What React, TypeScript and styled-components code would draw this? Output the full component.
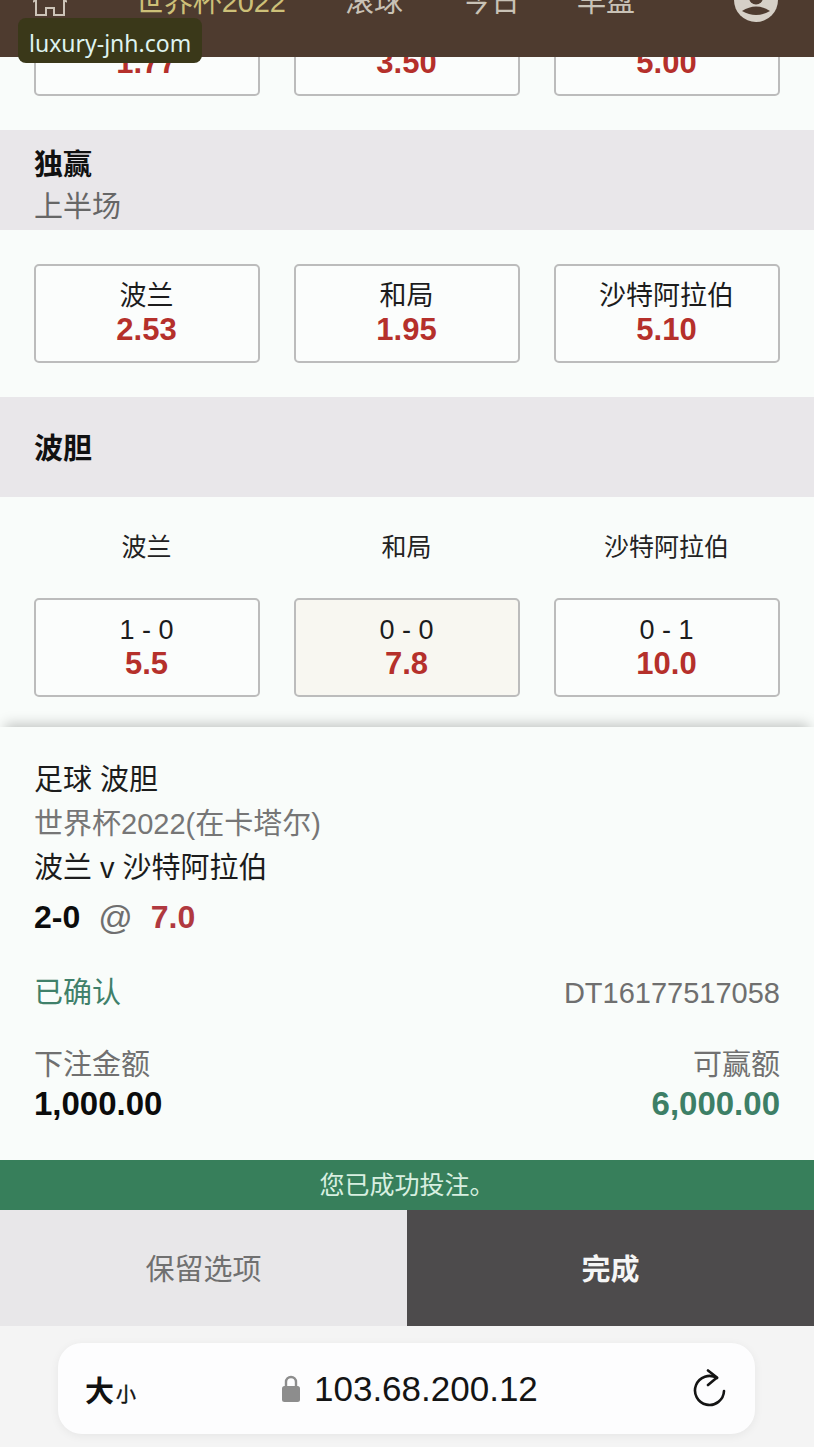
import React from "react";
import styled, { createGlobalStyle } from "styled-components";

const GlobalStyle = createGlobalStyle`
  html, body {
    margin: 0;
    padding: 0;
    background: #f9fcfa;
    font-family: "Liberation Sans", "Noto Sans CJK SC", sans-serif;
  }
  * { box-sizing: border-box; }
`;

const Page = styled.div`
  position: relative;
  width: 814px;
  height: 1447px;
  overflow: hidden;
  background: #f9fcfa;
`;

const Header = styled.header`
  position: relative;
  z-index: 2;
  height: 57px;
  overflow: hidden;
  background: #4e3b2f;
`;

const Nav = styled.nav`
  display: grid;
  grid-template-columns: 103px 210px 117px 115px 157px 42px;
  align-items: center;
  height: 42px;
  margin-top: -18px;
  padding-left: 33px;
`;

const NavItem = styled.div<{ $active?: boolean }>`
  margin: -3px 0 0 -1px;
  font-size: 29px;
  line-height: 42px;
  white-space: nowrap;
  letter-spacing: ${(p) => (p.$active ? "-0.1px" : "0")};
  color: ${(p) => (p.$active ? "#cdc078" : "#c9c2b6")};
`;

const Watermark = styled.div`
  position: absolute;
  z-index: 3;
  top: 18px;
  left: 18px;
  width: 184px;
  height: 45px;
  border-radius: 8px;
  background: #3a3819;
  color: #def3f0;
  font-family: "Noto Sans", sans-serif;
  font-size: 23px;
  line-height: 50px;
  padding-left: 11px;
  white-space: nowrap;
`;

const Market = styled.section<{ $pull?: boolean }>`
  padding: 34px 34px;
  margin-top: ${(p) => (p.$pull ? "-94px" : "0")};
`;

const LastMarket = styled(Market)`
  padding-bottom: 30px;
`;

const MarketHeader = styled.div`
  height: 100px;
  padding: 14px 34px 0;
  background: #e9e7ea;
`;

const CentredHeader = styled(MarketHeader)`
  display: flex;
  align-items: center;
  padding-top: 3px;
`;

const MarketTitle = styled.div`
  font-size: 29px;
  line-height: 42px;
  font-weight: 700;
  color: #111;
`;

const MarketSub = styled.div`
  font-size: 29px;
  line-height: 42px;
  color: #666;
`;

const Grid = styled.div`
  display: grid;
  grid-template-columns: repeat(3, 226px);
  gap: 34px;
`;

const ColumnLabel = styled.div`
  font-size: 25px;
  line-height: 30px;
  text-align: center;
  padding: 1px 1px 0 0;
  color: #222;
  margin-bottom: 36px;
`;

const OddsButton = styled.div<{ $selected?: boolean }>`
  height: 99px;
  padding: 13px 1px 0 0;
  border: 2px solid #bcbcbc;
  border-radius: 5px;
  text-align: center;
  background: ${(p) => (p.$selected ? "#f8f7f1" : "#fbfdfc")};
`;

const OddsLabel = styled.div`
  font-size: 27px;
  line-height: 34px;
  color: #1c1c1c;
`;

const OddsValue = styled.div`
  font-size: 31px;
  line-height: 34px;
  font-weight: 700;
  color: #b5302b;
`;

const Slip = styled.section`
  position: relative;
  z-index: 1;
  padding: 31px 34px 36px;
  background: #f9fcfa;
  box-shadow: 0 -8px 12px -5px rgba(0, 0, 0, 0.22);
`;

const SlipLine = styled.div<{ $muted?: boolean }>`
  font-size: 29px;
  line-height: 44px;
  white-space: nowrap;
  color: ${(p) => (p.$muted ? "#767676" : "#1c1c1c")};
`;

const BetLine = styled.div`
  display: flex;
  align-items: center;
  gap: 18px;
  height: 44px;
  margin-top: 5px;
  font-size: 32px;
`;

const BetScore = styled.span`
  font-weight: 700;
  color: #0c0c0c;
`;

const BetAt = styled.span`
  font-size: 34px;
  color: #6f6f6f;
`;

const BetOdds = styled.span`
  font-weight: 700;
  color: #b0393f;
`;

const SplitRow = styled.div`
  display: flex;
  justify-content: space-between;
  margin-top: 32px;
  font-size: 29px;
  line-height: 44px;
`;

const Confirmed = styled.span`
  color: #40806a;
`;

const Reference = styled.span`
  color: #6f6f6f;
`;

const StakeRow = styled.div`
  display: flex;
  justify-content: space-between;
  margin-top: 30px;
`;

const StakeColumn = styled.div<{ $right?: boolean }>`
  text-align: ${(p) => (p.$right ? "right" : "left")};
`;

const StakeLabel = styled.div`
  font-size: 29px;
  line-height: 40px;
  color: #707070;
`;

const StakeValue = styled.div<{ $green?: boolean }>`
  margin-top: -1px;
  font-size: 33px;
  line-height: 40px;
  font-weight: 700;
  color: ${(p) => (p.$green ? "#3d7f66" : "#0c0c0c")};
`;

const SuccessBar = styled.div`
  height: 50px;
  background: #377f5b;
  color: #d8efe0;
  font-size: 25px;
  line-height: 50px;
  text-align: center;
`;

const Actions = styled.div`
  display: grid;
  grid-template-columns: 407px 407px;
  height: 116px;
`;

const ActionButton = styled.div<{ $primary?: boolean }>`
  display: flex;
  align-items: center;
  justify-content: center;
  padding-bottom: 3px;
  font-size: 29px;
  font-weight: ${(p) => (p.$primary ? 700 : 400)};
  background: ${(p) => (p.$primary ? "#4d4b4c" : "#e8e7e9")};
  color: ${(p) => (p.$primary ? "#f5f5f5" : "#707070")};
`;

const BrowserBar = styled.div`
  height: 121px;
  padding: 17px 59px 0 58px;
  background: #f4f4f4;
`;

const UrlPill = styled.div`
  display: flex;
  align-items: center;
  height: 91px;
  padding: 0 28px 0 27px;
  border-radius: 24px;
  background: #fdfdfe;
  box-shadow: 0 2px 10px rgba(0, 0, 0, 0.06);
`;

const TextSize = styled.div`
  display: flex;
  align-items: baseline;
  width: 197px;
  font-weight: 700;
  color: #111;
  font-size: 29px;
`;

const TextSizeSmall = styled.span`
  margin-left: 2px;
  font-size: 20px;
  font-weight: 400;
  -webkit-text-stroke: 0.4px #111;
`;

const UrlText = styled.div`
  flex: 1;
  margin-left: 14px;
  font-size: 35px;
  color: #141414;
`;

const AvatarSvg = styled.svg`
  margin: -7px 0 0 -1px;
`;

const HomeIcon = () => (
  <svg width="34" height="40" viewBox="0 0 34 40" fill="none" stroke="#cdc4b8" strokeWidth="2">
    <path d="M0 19 L17 3 L34 19 M3 16 V32 H13 V25 H21 V32 H31 V16" />
  </svg>
);

const AvatarIcon = () => (
  <AvatarSvg width="44" height="44" viewBox="0 0 44 44">
    <circle cx="22" cy="22" r="22" fill="#d6d0c7" />
    <circle cx="22" cy="19.5" r="7" fill="#4e3b2f" />
    <path d="M8 33 Q22 24 36 33 Q22 41 8 33 Z" fill="#4e3b2f" />
  </AvatarSvg>
);

const LockIcon = () => (
  <svg width="18" height="28" viewBox="0 0 18 28" fill="none">
    <path d="M4 12 V7 a5 5 0 0 1 10 0 V12" stroke="#8d8d8d" strokeWidth="2.4" />
    <rect x="0" y="11" width="18" height="16" rx="2.5" fill="#8d8d8d" />
  </svg>
);

const ReloadIcon = () => (
  <svg width="34" height="40" viewBox="0 0 34 40" fill="none" stroke="#141414" strokeWidth="2.6" strokeLinecap="round" strokeLinejoin="round">
    <path d="M31 22 A14.5 14.5 0 1 1 24 9" />
    <path d="M15 1.5 L24 8.5 L15 16" />
  </svg>
);

type Odds = { label: string; value: string; selected?: boolean };

const fullTime: Odds[] = [
  { label: "波兰", value: "1.77" },
  { label: "和局", value: "3.50" },
  { label: "沙特阿拉伯", value: "5.00" },
];

const halfTime: Odds[] = [
  { label: "波兰", value: "2.53" },
  { label: "和局", value: "1.95" },
  { label: "沙特阿拉伯", value: "5.10" },
];

const scores: Odds[] = [
  { label: "1 - 0", value: "5.5" },
  { label: "0 - 0", value: "7.8", selected: true },
  { label: "0 - 1", value: "10.0" },
];

const OddsGrid = ({ items }: { items: Odds[] }) => (
  <Grid>
    {items.map((o) => (
      <OddsButton key={o.label} $selected={o.selected}>
        <OddsLabel>{o.label}</OddsLabel>
        <OddsValue>{o.value}</OddsValue>
      </OddsButton>
    ))}
  </Grid>
);

const App = () => {
  return (
    <Page>
      <GlobalStyle />
      <Header>
        <Nav>
          <HomeIcon />
          <NavItem $active>世界杯2022</NavItem>
          <NavItem>滚球</NavItem>
          <NavItem>今日</NavItem>
          <NavItem>早盘</NavItem>
          <AvatarIcon />
        </Nav>
      </Header>
      <Watermark>luxury-jnh.com</Watermark>

      <Market $pull>
        <OddsGrid items={fullTime} />
      </Market>

      <MarketHeader>
        <MarketTitle>独赢</MarketTitle>
        <MarketSub>上半场</MarketSub>
      </MarketHeader>
      <Market>
        <OddsGrid items={halfTime} />
      </Market>

      <CentredHeader>
        <MarketTitle>波胆</MarketTitle>
      </CentredHeader>
      <LastMarket>
        <Grid>
          <ColumnLabel>波兰</ColumnLabel>
          <ColumnLabel>和局</ColumnLabel>
          <ColumnLabel>沙特阿拉伯</ColumnLabel>
        </Grid>
        <OddsGrid items={scores} />
      </LastMarket>

      <Slip>
        <SlipLine>足球 波胆</SlipLine>
        <SlipLine $muted>世界杯2022(在卡塔尔)</SlipLine>
        <SlipLine>波兰 v 沙特阿拉伯</SlipLine>
        <BetLine>
          <BetScore>2-0</BetScore>
          <BetAt>@</BetAt>
          <BetOdds>7.0</BetOdds>
        </BetLine>
        <SplitRow>
          <Confirmed>已确认</Confirmed>
          <Reference>DT16177517058</Reference>
        </SplitRow>
        <StakeRow>
          <StakeColumn>
            <StakeLabel>下注金额</StakeLabel>
            <StakeValue>1,000.00</StakeValue>
          </StakeColumn>
          <StakeColumn $right>
            <StakeLabel>可赢额</StakeLabel>
            <StakeValue $green>6,000.00</StakeValue>
          </StakeColumn>
        </StakeRow>
      </Slip>

      <SuccessBar>您已成功投注。</SuccessBar>
      <Actions>
        <ActionButton>保留选项</ActionButton>
        <ActionButton $primary>完成</ActionButton>
      </Actions>

      <BrowserBar>
        <UrlPill>
          <TextSize>
            大<TextSizeSmall>小</TextSizeSmall>
          </TextSize>
          <LockIcon />
          <UrlText>103.68.200.12</UrlText>
          <ReloadIcon />
        </UrlPill>
      </BrowserBar>
    </Page>
  );
};

export default App;
